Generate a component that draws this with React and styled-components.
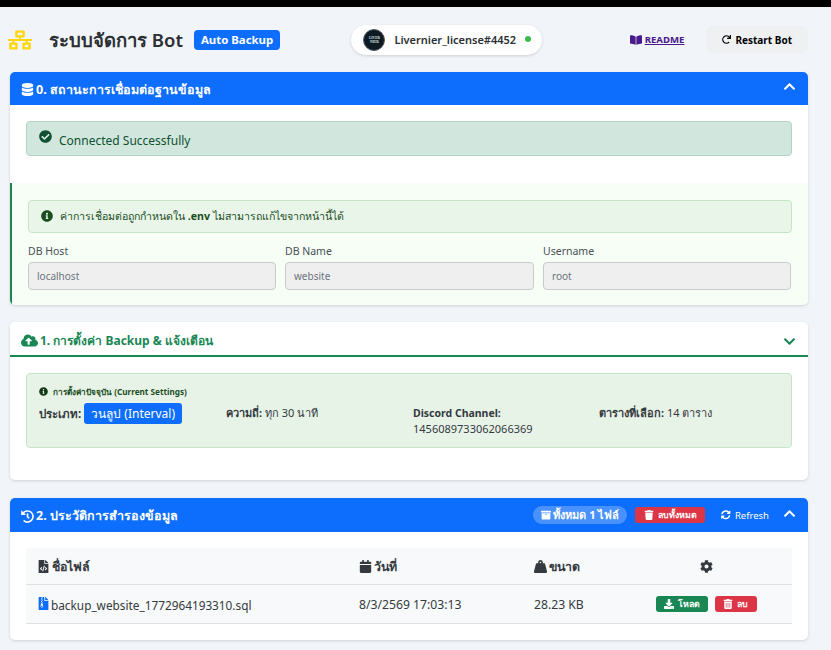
import React from 'react'
import styled, { createGlobalStyle } from 'styled-components'
import {
  FaNetworkWired, FaDatabase, FaChevronUp, FaChevronDown, FaCheckCircle, FaInfoCircle,
  FaCloudUploadAlt, FaHistory, FaArchive, FaTrash, FaTrashAlt, FaSyncAlt, FaFileCode,
  FaCalendar, FaWeightHanging, FaCog, FaDownload, FaBookOpen, FaRedo, FaFileArchive,
} from 'react-icons/fa'

const Global = createGlobalStyle`
  * { box-sizing: border-box; }
  html, body { margin: 0; height: 650px; overflow: hidden; }
  body {
    background: #f1f4f8;
    color: #212529;
    font-family: "Noto Sans", "Open Sans", sans-serif;
    font-size: 13px;
  }
`

const TopStrip = styled.div`
  height: 7px;
  background: #000;
`

const Page = styled.div`
  padding: 0 23px 0 10px;
`

const Header = styled.header`
  height: 65px;
  display: flex;
  align-items: center;
`

const Brand = styled.div`
  width: 343px;
  display: flex;
  align-items: center;
  svg { color: #ffd60a; font-size: 24px; margin-left: -2px; }
`

const Title = styled.h1`
  margin: 0 0 0 17px;
  padding-top: 2px;
  font-size: 18.5px;
  font-weight: 600;
  color: #2b2f33;
`

const Badge = styled.span`
  margin-left: 11px;
  background: #0d6efd;
  color: #fff;
  font-size: 11.4px;
  font-weight: 700;
  border-radius: 4px;
  padding: 2px 7px;
  line-height: 16px;
`

const UserPill = styled.div`
  width: 191px;
  height: 30px;
  background: #fff;
  border-radius: 16px;
  box-shadow: 0 1px 3px rgba(0, 0, 0, .15);
  display: flex;
  align-items: center;
  padding-left: 12px;
  font-size: 11px;
  font-weight: 600;
  color: #2b2f33;
`

const Avatar = styled.span`
  width: 22px;
  height: 22px;
  border-radius: 50%;
  background: #0e1a22;
  border: 1px solid #56606a;
  color: #dfe4e8;
  font-family: "Liberation Serif", serif;
  font-size: 3.5px;
  line-height: 4px;
  text-align: center;
  display: flex;
  align-items: center;
  justify-content: center;
  margin-right: 9px;
`

const Dot = styled.span`
  width: 6px;
  height: 6px;
  border-radius: 50%;
  background: #3dba4e;
  margin-left: 9px;
  margin-bottom: 2px;
`

const Readme = styled.a`
  margin-left: 88px;
  display: flex;
  align-items: center;
  gap: 3px;
  color: #4a1a8c;
  font-size: 9.6px;
  font-weight: 700;
  text-decoration: underline;
  svg { font-size: 12px; }
`

const RestartButton = styled.button`
  margin-left: 22px;
  width: 102px;
  height: 27px;
  border: 0;
  border-radius: 6px;
  background: #eff0f2;
  color: #000;
  font: 700 10px "Noto Sans", sans-serif;
  display: flex;
  align-items: center;
  justify-content: center;
  gap: 4px;
  svg { font-size: 9px; }
`

const Card = styled.section`
  background: #fff;
  border-radius: 5px;
  box-shadow: 0 1px 3px rgba(0, 0, 0, .14);
  margin-bottom: ${p => p.$gap || 17}px;
  overflow: hidden;
`

const CardHead = styled.div`
  height: ${p => p.$h || 33}px;
  display: flex;
  align-items: center;
  padding: ${p => (p.$light ? 3 : 2)}px 11px 0;
  background: ${p => (p.$light ? '#fff' : '#0d6efd')};
  color: ${p => (p.$light ? '#198754' : '#fff')};
  border-bottom: ${p => (p.$light ? '2px solid #198754' : '0')};
`

const HeadTitle = styled.h2`
  margin: 0;
  flex: 1;
  font-size: ${p => p.$size || 12.5}px;
  font-weight: 700;
  display: flex;
  align-items: center;
  gap: 2px;
  svg { font-size: ${p => p.$icon || 13}px; }
`

const HeadActions = styled.div`
  display: flex;
  align-items: center;
  margin-top: -2px;
`

const Chevron = styled.span`
  display: flex;
  margin: ${p => (p.$up ? '-6px 1px 0 14px' : '2px 1px 0 14px')};
  font-size: 13px;
`

const Alert = styled.div`
  height: ${p => p.$h}px;
  border-radius: 4px;
  display: flex;
  align-items: center;
  gap: 7px;
  padding-left: 12px;
`

const SuccessAlert = styled(Alert)`
  background: #d1e7dd;
  border: 1px solid #b4d3c5;
  color: #0f5132;
  font-size: 12px;
  padding-top: 3px;
  svg { font-size: 13px; margin-bottom: 7px; }
`

const EnvAlert = styled(Alert)`
  background: #e9f5e9;
  border: 1px solid #c5e6c5;
  color: #1b4d1e;
  font-size: 10.6px;
  svg { font-size: 12px; margin-bottom: 2px; }
  strong { font-weight: 700; }
`

const ConnBody = styled.div`
  padding: 16px 16px 27px;
`

const EnvPanel = styled.div`
  background: #f6fef6;
  border-left: 2px solid #198754;
  padding: 17px 16px 15px;
`

const FieldGrid = styled.div`
  display: grid;
  grid-template-columns: 248px 249px 248px;
  column-gap: 9px;
  margin-top: 10px;
`

const Field = styled.label`
  display: block;
  font-size: 10.5px;
  color: #495057;
  line-height: 17px;
`

const Input = styled.div`
  height: 28px;
  margin-top: 2px;
  background: #efefef;
  border: 1px solid #c8cbce;
  border-radius: 4px;
  padding: 0 8px;
  display: flex;
  align-items: center;
  font-size: 10px;
  color: #6c757d;
`

const SettingsBody = styled.div`
  padding: 16px 16px 32px;
`

const SettingsBox = styled.div`
  height: 75px;
  background: #e8f3e8;
  border: 1px solid #c5e6c5;
  border-radius: 4px;
  padding: 11px 12px;
`

const SettingsTitle = styled.div`
  display: flex;
  align-items: center;
  gap: 5px;
  font-size: 8.2px;
  font-weight: 700;
  color: #1b4d1e;
  line-height: 13px;
  svg { font-size: 9px; color: #123a16; }
`

const SettingsGrid = styled.div`
  display: grid;
  grid-template-columns: 187px 187px 186px 1fr;
  margin-top: 5px;
  font-size: 11px;
  line-height: 15px;
  color: #343a40;
  b { font-weight: 700; }
`

const SettingCell = styled.div`
  padding-top: 2px;
`

const ChannelLabel = styled.b`
  font-size: 10.5px;
`

const TypeLabel = styled.b`
  font-size: 11.5px;
`

const TypeBadge = styled.span`
  display: inline-block;
  background: #0d6efd;
  color: #fff;
  border-radius: 3px;
  padding: 0 7px;
  margin-left: 3px;
  font-size: 12px;
  line-height: 21px;
`

const HistoryBody = styled.div`
  padding: 16px;
`

const CountPill = styled.span`
  background: rgba(255, 255, 255, .25);
  border-radius: 10px;
  height: 18px;
  padding: 0 8px;
  display: flex;
  align-items: center;
  gap: 2px;
  font-size: 11px;
  font-weight: 700;
  svg { font-size: 10px; }
`

const SmallButton = styled.button`
  height: 16px;
  width: ${p => p.$w}px;
  border: 0;
  border-radius: 3px;
  background: ${p => p.$bg};
  color: #fff;
  padding: 0;
  margin-left: ${p => p.$ml || 0}px;
  display: inline-flex;
  align-items: center;
  justify-content: center;
  gap: 4px;
  font: 700 8.8px "Noto Sans", sans-serif;
  svg { font-size: 10px; }
`

const RefreshLink = styled.span`
  margin-left: 16px;
  display: flex;
  align-items: center;
  gap: 4px;
  font-size: 9.5px;
  svg { font-size: 9.5px; }
`

const Table = styled.div`
  background: #f8f9fa;
`

const Row = styled.div`
  display: grid;
  grid-template-columns: 322px 175px 86px 1fr;
  align-items: center;
  height: ${p => p.$h}px;
  padding-left: 11px;
  border-bottom: 1px solid #dee2e6;
`

const HeadCell = styled.div`
  display: flex;
  align-items: center;
  justify-content: ${p => (p.$center ? 'center' : 'flex-start')};
  gap: 2px;
  font-size: 12.4px;
  font-weight: 700;
  color: #343a40;
  svg { font-size: 13px; }
`

const Cell = styled.div`
  padding-top: 1px;
  font-size: 12.2px;
  color: #343a40;
`

const FileCell = styled(Cell)`
  display: flex;
  align-items: center;
  gap: 1px;
  font-size: 11.8px;
  svg { font-size: 13px; color: #0d6efd; margin-bottom: 3px; }
`

const Actions = styled.div`
  display: flex;
  justify-content: center;
  gap: 7px;
`

export default function App() {
  return (
    <>
      <Global />
      <TopStrip />
      <Page>
        <Header>
          <Brand>
            <FaNetworkWired />
            <Title>ระบบจัดการ Bot</Title>
            <Badge>Auto Backup</Badge>
          </Brand>
          <UserPill>
            <Avatar>LIVER<br />NIER</Avatar>
            Livernier_license#4452
            <Dot />
          </UserPill>
          <Readme><FaBookOpen />README</Readme>
          <RestartButton><FaRedo />Restart Bot</RestartButton>
        </Header>

        <Card>
          <CardHead>
            <HeadTitle><FaDatabase />0. สถานะการเชื่อมต่อฐานข้อมูล</HeadTitle>
            <Chevron $up><FaChevronUp /></Chevron>
          </CardHead>
          <ConnBody>
            <SuccessAlert $h={35}><FaCheckCircle />Connected Successfully</SuccessAlert>
          </ConnBody>
          <EnvPanel>
            <EnvAlert $h={33}><FaInfoCircle /><span>ค่าการเชื่อมต่อถูกกำหนดใน <strong>.env</strong> ไม่สามารถแก้ไขจากหน้านี้ได้</span></EnvAlert>
            <FieldGrid>
              <Field>DB Host<Input>localhost</Input></Field>
              <Field>DB Name<Input>website</Input></Field>
              <Field>Username<Input>root</Input></Field>
            </FieldGrid>
          </EnvPanel>
        </Card>

        <Card $gap={18}>
          <CardHead $light $h={35}>
            <HeadTitle $icon={17} $size={12}><FaCloudUploadAlt />1. การตั้งค่า Backup &amp; แจ้งเตือน</HeadTitle>
            <Chevron><FaChevronDown /></Chevron>
          </CardHead>
          <SettingsBody>
            <SettingsBox>
              <SettingsTitle><FaInfoCircle />การตั้งค่าปัจจุบัน (Current Settings)</SettingsTitle>
              <SettingsGrid>
                <div><TypeLabel>ประเภท:</TypeLabel><TypeBadge>วนลูป (Interval)</TypeBadge></div>
                <SettingCell><b>ความถี่:</b> ทุก 30 นาที</SettingCell>
                <SettingCell><ChannelLabel>Discord Channel:</ChannelLabel><br />1456089733062066369</SettingCell>
                <SettingCell><b>ตารางที่เลือก:</b> 14 ตาราง</SettingCell>
              </SettingsGrid>
            </SettingsBox>
          </SettingsBody>
        </Card>

        <Card>
          <CardHead $h={34}>
            <HeadTitle><FaHistory />2. ประวัติการสำรองข้อมูล</HeadTitle>
            <HeadActions>
              <CountPill><FaArchive />ทั้งหมด 1 ไฟล์</CountPill>
              <SmallButton $bg="#dc3545" $ml={8} $w={70}><FaTrash />ลบทั้งหมด</SmallButton>
              <RefreshLink><FaSyncAlt />Refresh</RefreshLink>
            </HeadActions>
            <Chevron $up><FaChevronUp /></Chevron>
          </CardHead>
          <HistoryBody>
            <Table>
              <Row $h={37}>
                <HeadCell><FaFileCode />ชื่อไฟล์</HeadCell>
                <HeadCell><FaCalendar />วันที่</HeadCell>
                <HeadCell><FaWeightHanging />ขนาด</HeadCell>
                <HeadCell $center><FaCog /></HeadCell>
              </Row>
              <Row $h={39}>
                <FileCell><FaFileArchive />backup_website_1772964193310.sql</FileCell>
                <Cell>8/3/2569 17:03:13</Cell>
                <Cell>28.23 KB</Cell>
                <Actions>
                  <SmallButton $bg="#198754" $w={52}><FaDownload />โหลด</SmallButton>
                  <SmallButton $bg="#dc3545" $w={42}><FaTrashAlt />ลบ</SmallButton>
                </Actions>
              </Row>
            </Table>
          </HistoryBody>
        </Card>
      </Page>
    </>
  )
}
